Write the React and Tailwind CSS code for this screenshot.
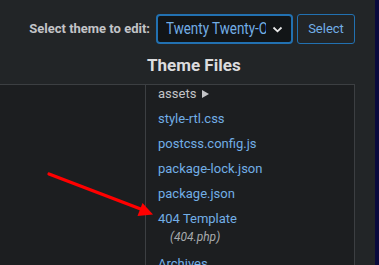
const files = ["style-rtl.css", "postcss.config.js", "package-lock.json", "package.json"];

export default function App() {
  return (
    <div className="relative flex w-[379px] h-[265px] overflow-hidden bg-[#222527] font-['Roboto',sans-serif]">
      <div className="flex flex-col flex-1">
        <div className="flex items-center justify-end gap-[4px] pt-[14px] pr-[20px]">
          <label className="mr-[2px] text-[13px] font-bold text-[#c3c4c7]">Select theme to edit:</label>
          <div className="flex items-center w-[137px] h-[30px] pl-[8px] pr-[8px] rounded-[4px] border-2 border-[#2271b1] bg-[#121517]">
            <div className="flex-1 overflow-hidden">
              <span className="inline-block whitespace-nowrap origin-left scale-x-[0.79] text-[17px] leading-[22px] text-[#72aee6]">
                Twenty Twenty-One
              </span>
            </div>
            <svg width="11" height="7" viewBox="0 0 11 7" className="ml-[6px] shrink-0">
              <path d="M1.5 1.5 L5.5 5.3 L9.5 1.5" fill="none" stroke="#e8e8e8" strokeWidth="1.8" />
            </svg>
          </div>
          <button className="w-[58px] h-[30px] rounded-[3px] border border-[#2271b1] text-[13px] text-[#72aee6]">Select</button>
        </div>

        <h2 className="mt-[11px] pl-[147px] text-[17px] leading-[20px] font-bold text-[#dcdcde]">Theme Files</h2>

        <div className="mt-[9px] flex flex-1 w-[355px] border-t border-r border-[#3c3f42] bg-[#1c1e20] overflow-hidden">
          <div className="w-[146px] border-r border-[#3c3f42]" />
          <ul className="-mt-[4px] pl-[12px] text-[13px] leading-[25px] text-[#72aee6]">
            <li className="flex items-center gap-[6px] text-[#c3c4c7]">
              assets
              <svg width="7" height="8" viewBox="0 0 7 8">
                <path d="M0 0 L7 4 L0 8 Z" fill="#c3c4c7" />
              </svg>
            </li>
            {files.map((f) => (
              <li key={f}>{f}</li>
            ))}
            <li>
              404 Template
              <div className="-mt-[3px] pl-[12px] text-[12px] leading-[18px] italic text-[#a7aaad]">(404.php)</div>
            </li>
            <li className="mt-[5px]">Archives</li>
          </ul>
        </div>
      </div>
      <div className="w-[4px] bg-[#0a0a3c]" />

      <svg className="absolute left-0 top-0" width="379" height="265" viewBox="0 0 379 265">
        <line x1="49" y1="174" x2="142" y2="209.5" stroke="#ff0000" strokeWidth="3.2" strokeLinecap="round" />
        <path d="M153 214.5 L137.5 216 L142.5 203 Z" fill="#ff0000" />
      </svg>
    </div>
  );
}
